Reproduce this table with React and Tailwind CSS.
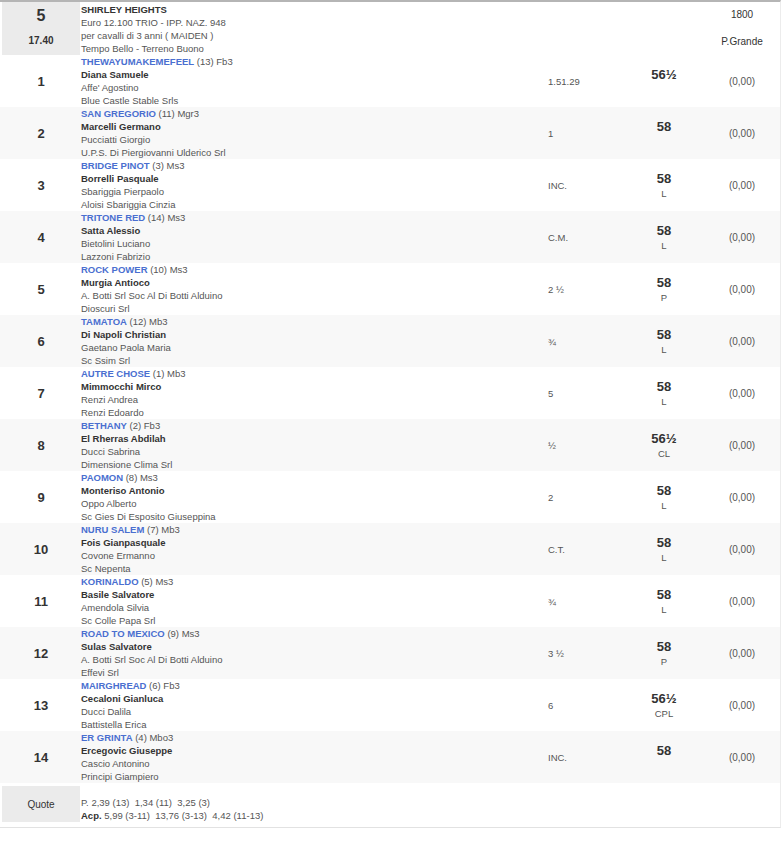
const rows = [
  { n: 1, horse: "THEWAYUMAKEMEFEEL", extra: "(13) Fb3", jockey: "Diana Samuele", trainer: "Affe' Agostino", owner: "Blue Castle Stable Srls", dist: "1.51.29", weight: "56½", note: "" },
  { n: 2, horse: "SAN GREGORIO", extra: "(11) Mgr3", jockey: "Marcelli Germano", trainer: "Pucciatti Giorgio", owner: "U.P.S. Di Piergiovanni Ulderico Srl", dist: "1", weight: "58", note: "" },
  { n: 3, horse: "BRIDGE PINOT", extra: "(3) Ms3", jockey: "Borrelli Pasquale", trainer: "Sbariggia Pierpaolo", owner: "Aloisi Sbariggia Cinzia", dist: "INC.", weight: "58", note: "L" },
  { n: 4, horse: "TRITONE RED", extra: "(14) Ms3", jockey: "Satta Alessio", trainer: "Bietolini Luciano", owner: "Lazzoni Fabrizio", dist: "C.M.", weight: "58", note: "L" },
  { n: 5, horse: "ROCK POWER", extra: "(10) Ms3", jockey: "Murgia Antioco", trainer: "A. Botti Srl Soc Al Di Botti Alduino", owner: "Dioscuri Srl", dist: "2 ½", weight: "58", note: "P" },
  { n: 6, horse: "TAMATOA", extra: "(12) Mb3", jockey: "Di Napoli Christian", trainer: "Gaetano Paola Maria", owner: "Sc Ssim Srl", dist: "¾", weight: "58", note: "L" },
  { n: 7, horse: "AUTRE CHOSE", extra: "(1) Mb3", jockey: "Mimmocchi Mirco", trainer: "Renzi Andrea", owner: "Renzi Edoardo", dist: "5", weight: "58", note: "L" },
  { n: 8, horse: "BETHANY", extra: "(2) Fb3", jockey: "El Rherras Abdilah", trainer: "Ducci Sabrina", owner: "Dimensione Clima Srl", dist: "½", weight: "56½", note: "CL" },
  { n: 9, horse: "PAOMON", extra: "(8) Ms3", jockey: "Monteriso Antonio", trainer: "Oppo Alberto", owner: "Sc Gies Di Esposito Giuseppina", dist: "2", weight: "58", note: "L" },
  { n: 10, horse: "NURU SALEM", extra: "(7) Mb3", jockey: "Fois Gianpasquale", trainer: "Covone Ermanno", owner: "Sc Nepenta", dist: "C.T.", weight: "58", note: "L" },
  { n: 11, horse: "KORINALDO", extra: "(5) Ms3", jockey: "Basile Salvatore", trainer: "Amendola Silvia", owner: "Sc Colle Papa Srl", dist: "¾", weight: "58", note: "L" },
  { n: 12, horse: "ROAD TO MEXICO", extra: "(9) Ms3", jockey: "Sulas Salvatore", trainer: "A. Botti Srl Soc Al Di Botti Alduino", owner: "Effevi Srl", dist: "3 ½", weight: "58", note: "P" },
  { n: 13, horse: "MAIRGHREAD", extra: "(6) Fb3", jockey: "Cecaloni Gianluca", trainer: "Ducci Dalila", owner: "Battistella Erica", dist: "6", weight: "56½", note: "CPL" },
  { n: 14, horse: "ER GRINTA", extra: "(4) Mbo3", jockey: "Ercegovic Giuseppe", trainer: "Cascio Antonino", owner: "Principi Giampiero", dist: "INC.", weight: "58", note: "" },
];

export default function App() {
  return (
    <div className="w-[784px] h-[844px] bg-white font-['Liberation_Sans',Arial,sans-serif] text-[9.5px] leading-[13px] text-[#555]">
      <div className="w-[781px] border-t-2 border-r border-b border-t-[#b5b5b5] border-r-[#ececec] border-b-[#e2e2e2] pb-[5px]">
        {/* race header */}
        <div className="flex h-[53px]">
          <div className="ml-[2px] w-[78px] bg-[#ebebeb] flex flex-col items-center font-bold text-[#333]">
            <div className="text-[16px] leading-[20px] mt-[4px]">5</div>
            <div className="text-[10px] mt-[8px]">17.40</div>
          </div>
          <div className="flex-1 pl-[1px] pt-[1px]">
            <div className="font-bold text-[#333]">SHIRLEY HEIGHTS</div>
            <div>Euro 12.100 TRIO - IPP. NAZ. 948</div>
            <div>per cavalli di 3 anni ( MAIDEN )</div>
            <div>Tempo Bello - Terreno Buono</div>
          </div>
          <div className="w-[76px] flex flex-col items-center text-[10px] text-[#333] pt-[6px]">
            <div>1800</div>
            <div className="mt-[14px]">P.Grande</div>
          </div>
        </div>

        {rows.map((r) => (
          <div key={r.n} className={`flex h-[52px] ${r.n % 2 === 0 ? "bg-[#f8f8f8]" : "bg-white"}`}>
            <div className="ml-[2px] w-[78px] flex items-center justify-center font-bold text-[13px] text-[#333]">{r.n}</div>
            <div className="flex-1 pl-[1px]">
              <div>
                <span className="font-bold text-[#4a6fd0]">{r.horse}</span> {r.extra}
              </div>
              <div className="font-bold text-[#333]">{r.jockey}</div>
              <div>{r.trainer}</div>
              <div>{r.owner}</div>
            </div>
            <div className="w-[80px] flex items-center pl-[4px]">{r.dist}</div>
            <div className="w-[80px] flex flex-col items-center justify-center">
              <div className="font-bold text-[13px] leading-[16px] text-[#333]">{r.weight}</div>
              <div className="h-[13px]">{r.note}</div>
            </div>
            <div className="w-[76px] flex items-center justify-center text-[10px]">(0,00)</div>
          </div>
        ))}

        {/* quote */}
        <div className="flex h-[39px] pt-[3px]">
          <div className="ml-[2px] w-[78px] bg-[#ebebeb] flex items-center justify-center text-[10px] text-[#333]">Quote</div>
          <div className="flex-1 pl-[1px] pt-[10px]">
            <div>P. 2,39 (13)&nbsp; 1,34 (11)&nbsp; 3,25 (3)</div>
            <div><span className="font-bold text-[#333]">Acp.</span> 5,99 (3-11)&nbsp; 13,76 (3-13)&nbsp; 4,42 (11-13)</div>
          </div>
        </div>
      </div>
    </div>
  );
}
